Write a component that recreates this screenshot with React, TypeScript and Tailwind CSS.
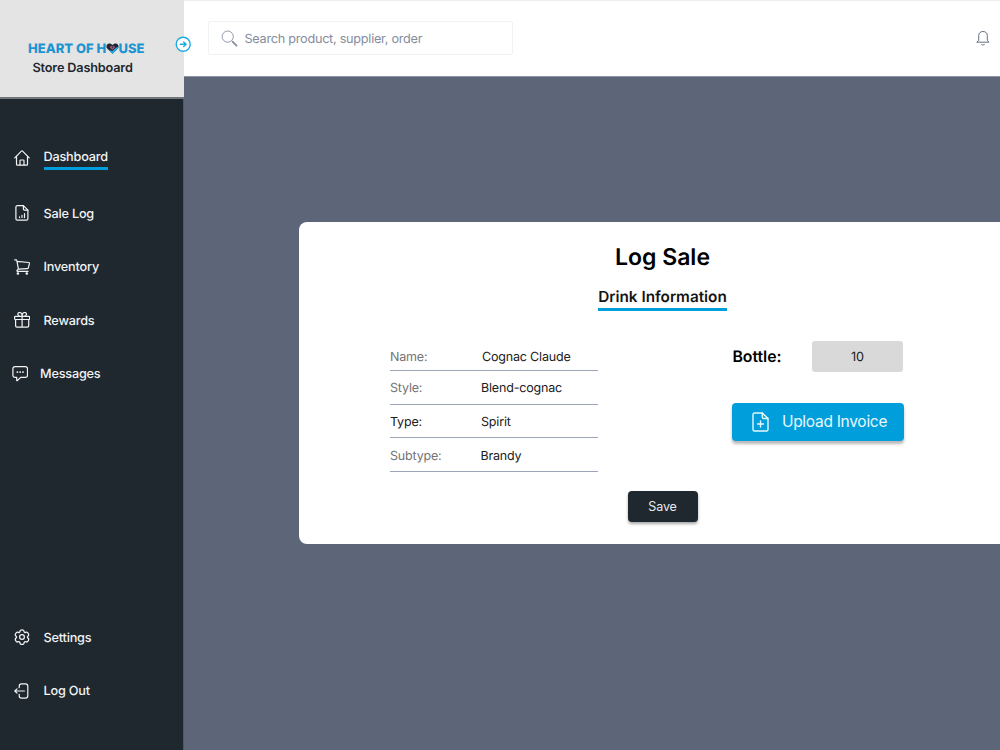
import type { ReactNode } from 'react';

interface IconProps {
  className?: string;
  children: ReactNode;
}

function Icon({ className = '', children }: IconProps): React.JSX.Element {
  return (
    <svg
      className={`w-4 h-4 shrink-0 ${className}`}
      viewBox="0 0 16 16"
      fill="none"
      stroke="currentColor"
      strokeWidth={1.2}
      strokeLinecap="round"
      strokeLinejoin="round"
    >
      {children}
    </svg>
  );
}

const icons = {
  home: (
    <>
      <path d="M.8 7.9 7.4 1.1a.9.9 0 0 1 1.2 0l6.6 6.8" />
      <path d="M2.5 6.4v7.9c0 .5.4.9.9.9h9.2c.5 0 .9-.4.9-.9V6.4" />
      <path d="M6 15v-4.2c0-.5.3-.8.8-.8h2.4c.5 0 .8.3.8.8V15" />
    </>
  ),
  saleLog: (
    <>
      <path d="M9.4.7H3.3c-.8 0-1.4.6-1.4 1.4v11.7c0 .8.6 1.4 1.4 1.4h9.2c.8 0 1.4-.6 1.4-1.4V5.2z" />
      <path d="M9.4.7v3c0 .8.6 1.5 1.4 1.5h3.1" />
      <path d="M5.5 12.6v-.7M8 12.6v-2.3M10.5 12.6V8.5" />
    </>
  ),
  cart: (
    <>
      <path d="M.7.9h1.5c.3 0 .5.2.6.5l1.6 8.7M3.2 2.4l11.6 1.1c.5 0 .8.3.7.8l-1.2 4.6c-.1.5-.4.8-.9.8l-9 .4-1.3 1.1c-.4.5-.1 1.1.4 1.1h10.6" />
      <circle cx="3.9" cy="14.5" r=".7" fill="currentColor" />
      <circle cx="12.8" cy="14.5" r=".7" fill="currentColor" />
    </>
  ),
  gift: (
    <>
      <rect x=".6" y="4.3" width="15" height="3.2" rx=".8" />
      <path d="M1.6 7.6v6.2c0 .8.5 1.4 1.3 1.4h10.4c.8 0 1.4-.6 1.4-1.4V7.6M8.1 4.4v10.7" />
      <path d="M8.1 4.2C8 1.8 7.1.5 5.7.5 4.3.5 3.6 1.5 3.9 2.7c.2.8.8 1.4 1.6 1.5M8.1 4.2C8.3 1.8 9.2.5 10.6.5c1.4 0 2.1 1 1.8 2.2-.2.8-.8 1.4-1.6 1.5" />
    </>
  ),
  chat: (
    <>
      <path d="M3 .7h10.4c1.3 0 2.1.8 2.1 2.1v6.5c0 1.3-.8 2.1-2.1 2.1H8.7l-3.3 3.1c-.4.4-.7.2-.7-.3v-2.8H3c-1.3 0-2.1-.8-2.1-2.1V2.8C.9 1.5 1.7.7 3 .7z" />
      <path d="M5.3 6.1h.1M8.1 6.1h.1M10.9 6.1h.1" strokeWidth={1.8} />
    </>
  ),
  gear: (
    <>
      <path d="M6.2 1.7C6.5.4 9.5.4 9.8 1.7l.1.5c.2.7.9 1.1 1.6.9l.6-.2c1.2-.3 2.7 2.3 1.8 3.2l-.4.4c-.5.5-.5 1.3 0 1.8l.4.4c.9.9-.6 3.5-1.8 3.2l-.6-.2c-.7-.2-1.4.2-1.6.9l-.1.7c-.3 1.3-3.3 1.3-3.6 0l-.1-.7c-.2-.7-.9-1.1-1.6-.9l-.6.2c-1.2.3-2.7-2.3-1.8-3.2l.4-.4c.5-.5.5-1.3 0-1.8l-.4-.4c-.9-.9.6-3.5 1.8-3.2l.6.2c.7.2 1.4-.2 1.6-.9z" transform="matrix(1.08 0 0 1.08 -.64 .1)" />
      <circle cx="8" cy="8" r="2.4" />
    </>
  ),
  logout: (
    <>
      <path d="M5.2 4.7V3.2C5.2 1.7 6 .8 7.5.8h4c1.5 0 2.3.9 2.3 2.4v9.6c0 1.5-.8 2.4-2.3 2.4h-4c-1.5 0-2.3-.9-2.3-2.4v-1.5" />
      <path d="M10.4 8H.8M3 5.9.8 8 3 10.1" />
    </>
  ),
};

interface NavItemProps {
  icon: ReactNode;
  label: string;
  className?: string;
}

function NavItem({ icon, label, className = 'pl-3.5 gap-[13.5px]' }: NavItemProps): React.JSX.Element {
  return (
    <div className={`flex h-[53.5px] items-center ${className}`}>
      <Icon>{icon}</Icon>
      <span className="pt-0.5">{label}</span>
    </div>
  );
}

function Logo(): React.JSX.Element {
  return (
    <div className="flex h-3 items-center whitespace-nowrap text-[13px] font-extrabold leading-3 text-[#1c94d2]">
      <span className="pt-0.5">HEART OF H</span>
      <svg className="-mx-[0.3px] h-[11px] w-[13px] shrink-0" viewBox="0 0 13 11">
        <path d="M6.5 10.8 1.2 5.6C-.4 3.7.5.4 3.4.4c1.3 0 2.3.6 3.1 1.6C7.3 1 8.3.4 9.6.4c2.9 0 3.8 3.3 2.2 5.2z" fill="#20272f" />
        <path d="M2.7 7.1 6.5 10.8l5.3-5.2c.5-.6.8-1.4.8-2.1L9.5 5.1 6.5 8z" fill="#1bafe8" />
        <path d="M6.4 7.1 4.2 4.9c-.7-1 .1-2 1-2 .5 0 .9.2 1.2.7.3-.5.7-.7 1.2-.7 1 0 1.7 1 1 2z" fill="#ba5276" />
        <circle cx="6.4" cy="4.6" r=".8" fill="#28335c" />
      </svg>
      <span className="pt-0.5">USE</span>
    </div>
  );
}

function Sidebar(): React.JSX.Element {
  return (
    <aside className="flex w-[184px] shrink-0 flex-col bg-[#1f282f] text-[12.7px] font-medium tracking-[-0.2px] text-[#f2f3f4]">
      <div className="h-[99px] border-b-2 border-[#70767a] bg-[#e4e4e4] pl-7 pt-[42px] tracking-normal">
        <Logo />
        <p className="pl-[4.5px] pt-[7px] font-semibold leading-4 tracking-[-0.17px] text-[#20272e]">Store Dashboard</p>
      </div>
      <nav className="flex flex-1 flex-col border-r border-[#50596a]">
        <div className="mt-[48px] flex h-[39.5px] items-start gap-[13.5px] pl-3.5">
          <Icon className="mt-[3px]">{icons.home}</Icon>
          <span className="h-[23px] border-b-[3px] border-[#009fdc] pt-px leading-5">Dashboard</span>
        </div>
        <NavItem icon={icons.saleLog} label="Sale Log" />
        <NavItem icon={icons.cart} label="Inventory" />
        <NavItem icon={icons.gift} label="Rewards" />
        <NavItem icon={icons.chat} label="Messages" className="gap-3 pl-3" />
        <div className="mb-[32.5px] mt-auto">
          <NavItem icon={icons.gear} label="Settings" />
          <NavItem icon={icons.logout} label="Log Out" />
        </div>
      </nav>
    </aside>
  );
}

function TopBar(): React.JSX.Element {
  return (
    <header className="flex h-[77px] items-start justify-between border-b border-t border-b-[#8f96a3] border-t-[#eeeeee] bg-white pl-[23.5px] pr-[9px] pt-5">
      <div className="flex h-[34px] w-[305.5px] items-center gap-[7px] rounded-[2px] border border-[#f1f2f4] pl-3 text-[#858d9d]">
        <svg className="h-[17px] w-[17px]" viewBox="0 0 17 17" fill="none" stroke="currentColor">
          <circle cx="6.7" cy="6.6" r="5.6" strokeWidth=".9" />
          <path d="m10.8 10.7 1.2 1.2" strokeWidth=".9" />
          <path d="m11.7 11.8 3.8 3.8" strokeWidth="1.8" strokeLinecap="round" />
        </svg>
        <span className="pt-[3px] text-[12.7px] leading-5 tracking-[-0.27px]">Search product, supplier, order</span>
      </div>
      <svg className="mt-[9px] h-4 w-4 text-[#667085]" viewBox="0 0 16 16" fill="none" stroke="currentColor" strokeLinecap="round" strokeLinejoin="round">
        <path d="M3.7 10.2V5.5C3.7 3 5.4 1.5 8 1.5s4.3 1.5 4.3 4v4.7l1.6 2H2.1z" />
        <path d="M6.7 14.6c.8.5 1.8.5 2.6 0" />
      </svg>
    </header>
  );
}

const drinkInfo = [
  { label: 'Name:', value: 'Cognac Claude', row: 'h-[30px] pt-[5px]', labelColor: 'text-[#737373]', indent: '' },
  { label: 'Style:', value: 'Blend-cognac', row: 'h-[34px] pt-1', labelColor: 'text-[#737373]', indent: '-ml-px' },
  { label: 'Type:', value: 'Spirit', row: 'h-[33px] pt-[5px]', labelColor: 'text-[#202020]', indent: '-ml-px' },
  { label: 'Subtype:', value: 'Brandy', row: 'h-[34px] pt-[5px]', labelColor: 'text-[#737373]', indent: '-ml-[1.5px]' },
];

function LogSaleCard(): React.JSX.Element {
  return (
    <section className="ml-[115px] mt-[145px] h-[322px] w-[727px] rounded-[8px] bg-white">
      <div className="flex flex-col items-center pt-[18px]">
        <h1 className="text-[23px] font-semibold leading-[34px] text-black">Log Sale</h1>
        <h2 className="mt-3 h-[25px] border-b-[3px] border-[#009fdc] text-[15.3px] font-semibold leading-[21px] text-[#141414]">
          Drink Information
        </h2>
      </div>
      <div className="flex pl-[91px] pt-[30px]">
        <div className="w-[208px] text-[12.5px] tracking-[-0.18px] text-[#202020]">
          {drinkInfo.map((item) => (
            <div key={item.label} className={`flex items-center border-b border-[#9da6b6] ${item.row}`}>
              <span className={`w-[92px] ${item.labelColor}`}>{item.label}</span>
              <span className={item.indent}>{item.value}</span>
            </div>
          ))}
        </div>
        <div className="ml-[134.4px]">
          <div className="flex h-[31px] items-center">
            <span className="w-[79.6px] text-[15.8px] font-semibold text-black">Bottle:</span>
            <div className="flex h-[31px] w-[91px] items-center justify-center rounded-[3px] bg-[#d9d9d9] pt-0.5 text-[12.7px] tracking-[-0.18px] text-[#202020]">
              10
            </div>
          </div>
          <button className="mt-[31px] flex h-[38px] w-[172px] items-center rounded-[4px] bg-[#009fdc] pl-5 text-[15.5px] tracking-[-0.28px] text-[#e9f7fd] shadow-[0_3px_3px_rgba(0,0,0,0.28)]">
            <svg className="h-5 w-[17px]" viewBox="0 0 17 20" fill="none" stroke="currentColor" strokeWidth={1.4} strokeLinecap="round" strokeLinejoin="round">
              <path d="M10.3 1H2.6C1.7 1 1 1.7 1 2.6v14.8c0 .9.7 1.6 1.6 1.6h11.8c.9 0 1.6-.7 1.6-1.6V6.5z" />
              <path d="M10.3 1v3.9c0 .9.7 1.6 1.6 1.6H16M8.5 9v6M5.5 12h6" />
            </svg>
            <span className="ml-[12.5px]">Upload Invoice</span>
          </button>
        </div>
      </div>
      <button className="mx-auto mt-[19px] block h-[31px] w-[70px] rounded-[4px] bg-[#1f282f] pt-0.5 text-[12.5px] tracking-[-0.15px] text-[#e9eaeb] shadow-[0_2px_3px_rgba(0,0,0,0.35)]">
        Save
      </button>
    </section>
  );
}

export default function App(): React.JSX.Element {
  return (
    <div className="relative flex h-[750px] w-[1000px] overflow-hidden bg-[#5d6679] font-['Inter',sans-serif] [text-rendering:geometricPrecision]">
      <Sidebar />
      <main className="min-w-0 flex-1">
        <TopBar />
        <LogSaleCard />
      </main>
      {/* Sidebar toggle sits on the edge between both panels */}
      <button className="absolute left-[175px] top-9 h-4 w-4" aria-label="Toggle sidebar">
        <svg className="h-4 w-4" viewBox="0 0 16 16" fill="white" stroke="#1babe2" strokeWidth={1.4} strokeLinecap="round" strokeLinejoin="round">
          <circle cx="8.2" cy="8.2" r="7" />
          <path d="M5.2 8.2H11M8.7 5.9 11.1 8.2l-2.4 2.3" />
        </svg>
      </button>
    </div>
  );
}
